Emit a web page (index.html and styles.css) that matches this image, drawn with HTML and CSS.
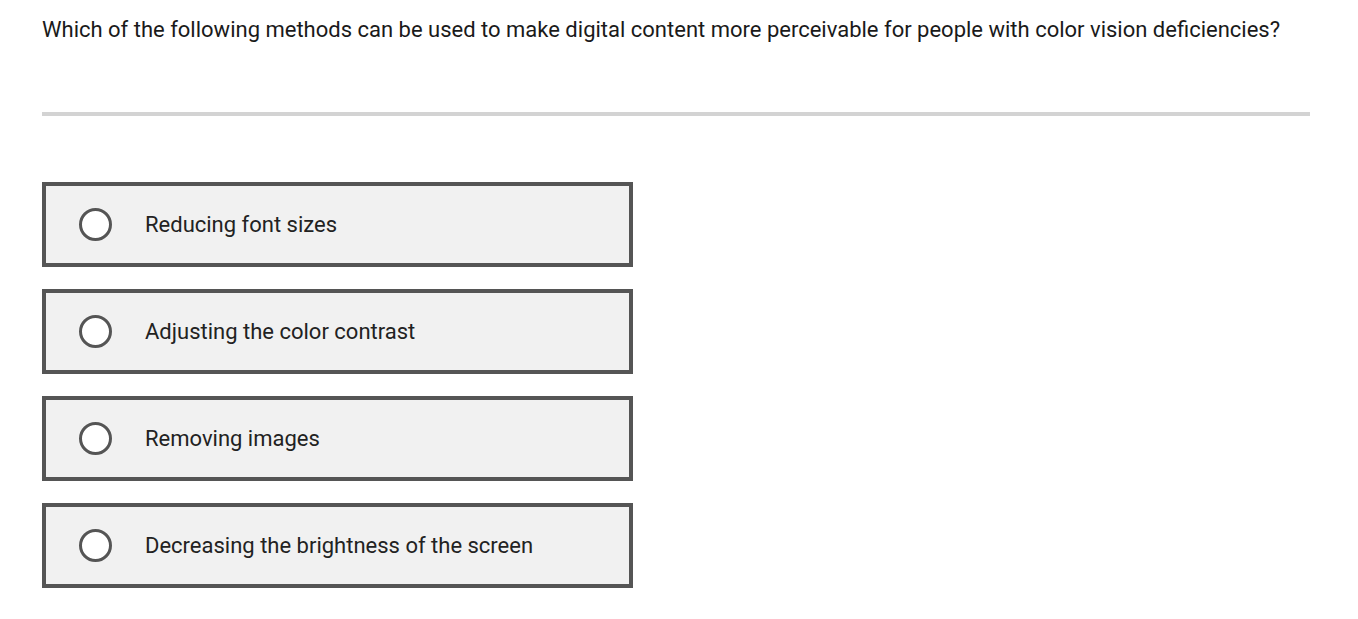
FILE: index.html
```html
<!DOCTYPE html>
<html>
<head>
<meta charset="utf-8">
<link rel="stylesheet" href="styles.css">
</head>
<body>
<div class="page">
  <p class="question">Which of the following methods can be used to make digital content more perceivable for people with color vision deficiencies?</p>
  <div class="divider"></div>
  <div class="options">
    <label class="option"><span class="radio"></span><span class="label">Reducing font sizes</span></label>
    <label class="option"><span class="radio"></span><span class="label">Adjusting the color contrast</span></label>
    <label class="option"><span class="radio"></span><span class="label">Removing images</span></label>
    <label class="option"><span class="radio"></span><span class="label">Decreasing the brightness of the screen</span></label>
  </div>
</div>
</body>
</html>
```
FILE: styles.css
```css
html, body { margin: 0; padding: 0; background: #fff; }
body { font-family: Roboto, "Liberation Sans", sans-serif; color: #1f1f1f; }
.page { padding: 16px 48px 0 42px; }
.question { margin: 0; font-size: 22px; line-height: 28px; color: #1a1a1a; }
.divider { height: 4px; background: #d3d3d3; margin-top: 68px; }
.options { margin-top: 66px; display: flex; flex-direction: column; gap: 22px; width: 591px; }
.option { box-sizing: border-box; height: 85px; border: 4px solid #555; background: #f1f1f1; display: flex; align-items: center; padding-left: 33px; }
.radio { box-sizing: border-box; width: 33px; height: 33px; border: 3px solid #555; border-radius: 50%; background: #fff; flex: none; }
.label { margin-left: 33px; font-size: 22px; color: #222; }
```
